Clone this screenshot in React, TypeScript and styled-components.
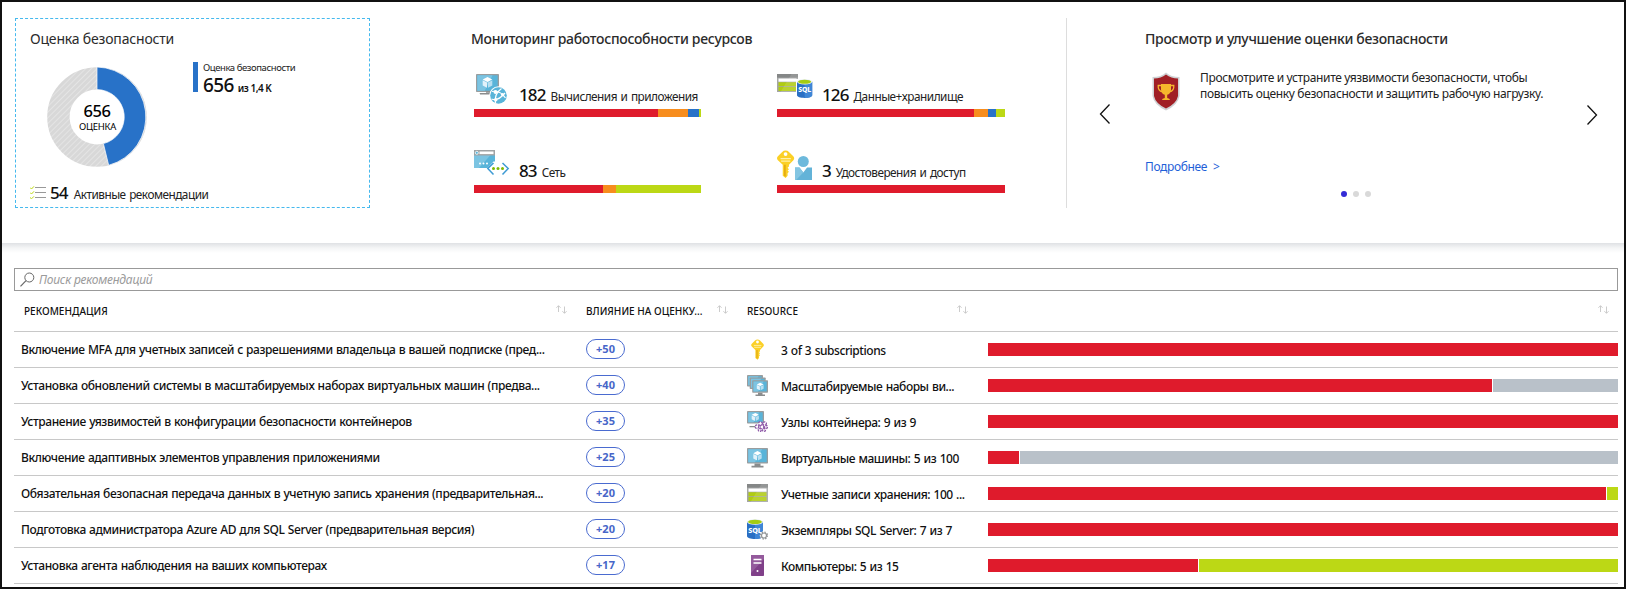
import React from 'react';
import styled, { createGlobalStyle } from 'styled-components';

const RED = '#df1b2c';
const ORANGE = '#f78d1e';
const BLUE = '#2872c8';
const LIME = '#bcd815';
const GREY = '#b9c1c9';

const GlobalStyle = createGlobalStyle`
  * { box-sizing: border-box; }
  body { margin: 0; background: #fff; }
`;

const Page = styled.div`
  width: 1626px;
  height: 589px;
  border: 2px solid #111;
  background: #fff;
  color: #111;
  font-family: 'Noto Sans', 'Open Sans', sans-serif;
  font-size: 12px;
  white-space: nowrap;
  overflow: hidden;
`;

const Overview = styled.section`
  display: flex;
  height: 241px;
  padding: 16px 0 0 13px;
`;

const Title = styled.h2<{ $medium?: boolean }>`
  margin: 0;
  padding-top: 1px;
  color: #2b2b2b;
  font-size: 14px;
  line-height: 20px;
  font-weight: ${(p) => (p.$medium ? 500 : 400)};
  letter-spacing: ${(p) => (p.$medium ? '-0.31px' : '-0.18px')};
`;

const ScoreCard = styled.div`
  width: 355px;
  height: 190px;
  padding: 9px 14px 0;
  border: 1px dashed #45b9ee;
`;

const ScoreBody = styled.div`
  display: flex;
  align-items: flex-start;
  height: 121px;
  margin-top: 13px;
`;

const Donut = styled.svg`
  margin: 5px 46px 0 17px;
  flex: none;
`;

const Legend = styled.div`
  height: 30px;
  padding-left: 5px;
  border-left: 5px solid ${BLUE};
`;

const LegendName = styled.div`
  color: #222;
  font-size: 9.5px;
  line-height: 11px;
  letter-spacing: -0.42px;
`;

const LegendValue = styled.div`
  display: flex;
  align-items: baseline;
  gap: 4px;
  font-size: 10px;
  font-weight: 600;
  line-height: 22px;
  margin-top: 1px;
  letter-spacing: -0.5px;
  strong { font-size: 19px; font-weight: 500; letter-spacing: -0.6px; }
`;

const CountLine = styled.div`
  display: flex;
  align-items: baseline;
  line-height: 20px;
  color: #111;
  svg { flex: none; }
`;

const Count = styled.span`
  font-size: 17px;
  font-weight: 500;
  letter-spacing: -0.9px;
  margin-right: 6px;
`;

const CountLabel = styled.span`
  font-size: 11.8px;
  letter-spacing: -0.5px;
  word-spacing: 1px;
  color: #222;
`;

const Monitoring = styled.div`
  width: 595px;
  padding: 10px 0 0;
  margin-left: 101px;
`;

const MonitorGrid = styled.div`
  display: grid;
  grid-template-columns: 227px 228px;
  gap: 33px 76px;
  margin: 25px 0 0 3px;
`;

const MonitorHead = styled.div`
  display: flex;
  height: 35px;
  > svg { flex: none; width: 36px; height: 31px; margin-right: 9px; }
  ${CountLine} { margin-top: 11px; }
  ${Count} { margin-right: 5px; }
`;

const Bar = styled.div<{ $height: number; $gap?: number }>`
  display: flex;
  gap: ${(p) => p.$gap ?? 0}px;
  height: ${(p) => p.$height}px;
`;

const Segment = styled.div<{ $color: string; $size: number }>`
  flex: ${(p) => p.$size} 1 0;
  background: ${(p) => p.$color};
`;

const Carousel = styled.div`
  display: flex;
  flex: 1;
  height: 190px;
  border-left: 1px solid #ddd;
`;

const NavButton = styled.button<{ $next?: boolean }>`
  width: 12px;
  height: 20px;
  padding: 0;
  border: 0;
  background: none;
  margin: ${(p) => (p.$next ? '87px 0 0 19px' : '86px 0 0 32px')};
`;

const Slide = styled.div`
  width: 422px;
  margin-left: 34px;
  padding-top: 10px;
`;

const SlideBody = styled.div`
  display: flex;
  height: 87px;
  margin-top: 21px;
  color: #222;
  line-height: 16px;
  letter-spacing: -0.35px;
  svg { flex: none; margin: 2px 19px 0 6px; }
`;

const SlideText = styled.p`
  margin: 0;
  white-space: pre-line;
`;

const MoreLink = styled.a`
  display: block;
  color: #1f5fd8;
  line-height: 20px;
  letter-spacing: -0.35px;
  word-spacing: 3px;
`;

const Dots = styled.div`
  display: flex;
  justify-content: center;
  gap: 6px;
  margin-top: 14px;
`;

const Dot = styled.i<{ $active?: boolean }>`
  width: 6px;
  height: 6px;
  border-radius: 50%;
  background: ${(p) => (p.$active ? '#342bd6' : '#d9d9d9')};
`;

const List = styled.section`
  height: 344px;
  padding: 25px 6px 0 12px;
  background: linear-gradient(#dfe1e4, #f4f5f6 5px, #fff 10px);
`;

const Search = styled.div`
  display: flex;
  align-items: center;
  height: 23px;
  padding-left: 5px;
  gap: 4px;
  border: 1px solid #999;
  background: #fff;
  color: #9b9b9b;
  font-style: italic;
  letter-spacing: -0.22px;
`;

const Columns = styled.div`
  display: grid;
  grid-template-columns: 572px 161px 241px 630px;
`;

const HeaderRow = styled(Columns)`
  height: 41px;
  border-bottom: 1px solid #c8c8c8;
`;

const HeaderCell = styled.div<{ $left?: number; $right?: number }>`
  display: flex;
  align-items: center;
  justify-content: space-between;
  padding-left: ${(p) => p.$left ?? 0}px;
  padding-right: ${(p) => p.$right ?? 19}px;
  font-size: 10px;
  font-weight: 500;
  letter-spacing: 0.02px;
  svg { margin: 0 0 3px auto; }
`;

const Row = styled(Columns)`
  height: 36px;
  border-bottom: 1px solid #c8c8c8;
`;

const Name = styled.div`
  padding-left: 7px;
  line-height: 35px;
  font-weight: 500;
  letter-spacing: -0.39px;
  word-spacing: 0.5px;
`;

const Pill = styled.span`
  display: block;
  width: 39px;
  height: 20px;
  margin-top: 7px;
  border: 1px solid #4a6bd0;
  border-radius: 10px;
  color: #4766c8;
  font-size: 11px;
  font-weight: 700;
  line-height: 18px;
  text-align: center;
`;

const Resource = styled.div`
  display: flex;
  font-weight: 500;
  line-height: 37px;
  letter-spacing: -0.45px;
  word-spacing: 0.7px;
  svg { flex: none; margin: 7px 13px 0 0; }
`;

const BarCell = styled.div`
  padding-top: 11px;
`;

const Cube = ({ x, y, s = 1 }: { x: number; y: number; s?: number }) => (
  <g transform={`translate(${x} ${y}) scale(${s})`}>
    <path d="M0-4.5 4-2.5 0-.5-4-2.5Z" fill="#fff" />
    <path d="M-4-1.8-.4 0v4.4L-4 2.6Z" fill="#e3f2fa" />
    <path d="M4-1.8.4 0v4.4L4 2.6Z" fill="#b9dff1" />
  </g>
);

const Screen = ({ x = 0, y = 0, w = 21, h = 15 }: { x?: number; y?: number; w?: number; h?: number }) => (
  <g transform={`translate(${x} ${y})`}>
    <rect width={w} height={h} rx=".7" fill="#9a9d9e" />
    <path d={`M1.3 1.3H${w - 1.3}V${h - 1.3}H1.3Z`} fill="#59b4d9" />
    <path d={`M1.3 1.3H${w * 0.72}L${w * 0.38} ${h - 1.3}H1.3Z`} fill="#7cc4e2" />
  </g>
);

const KeyShape = () => (
  <>
    <path d="M10.5.4Q12 .4 13 1.5l3.2 3.2Q17.5 6 16.3 7.5L13 11v1.2l-1 1 1 1-1 1 1 1-1 1V19l-1.5 1.8L8.4 19v-8L4.8 7.5Q3.5 6 4.8 4.7L8 1.5Q9 .4 10.5.4Z" fill="#fbd026" />
    <path d="M9.4 11h1.2v8.8L9.4 19Z" fill="#e3a912" />
    <circle cx="10.5" cy="3" r="1.4" fill="#fff" />
    <path d="M6.8 6.4h7.6M7.2 8.3h6.8" stroke="#fff0a8" strokeWidth=".9" />
  </>
);

const StorageShape = () => (
  <>
    <rect width="21" height="18" y="1" fill="#a4a6a6" />
    <path d="M0 1h21v3.6H0Z" fill="#858787" />
    <path d="M1.5 5.5h18v3.2h-18Z" fill="#fff" />
    <path d="M1.5 9.3h18v4h-18ZM1.5 14h18v4h-18Z" fill="#b0cc12" />
    <path d="M14.5 1H21v18H3.5Z" fill="#fff" opacity=".13" />
  </>
);

const SqlShape = () => (
  <>
    <path d="M0 2.8v14.4C0 18.8 3.5 20 8 20s8-1.2 8-2.8V2.8Z" fill="#2a6fc4" />
    <path d="M8 2.8v17.2c4.5 0 8-1.2 8-2.8V2.8Z" fill="#3f86d6" />
    <ellipse cx="8" cy="2.9" rx="8" ry="2.8" fill="#eef3f7" />
    <ellipse cx="8" cy="2.9" rx="6.9" ry="2.2" fill="#a4cb13" />
    <text x="8" y="14" textAnchor="middle" fontSize="7.2" fontWeight="800" letterSpacing="-.2" fill="#fff">SQL</text>
  </>
);

const Svg = ({ children, w = 21, h = 21 }: { children: React.ReactNode; w?: number; h?: number }) => (
  <svg width={w} height={h} viewBox={`0 0 ${w} ${h}`}>{children}</svg>
);

const icons: Record<string, React.ReactNode> = {
  key: <Svg><KeyShape /></Svg>,
  vm: (
    <Svg>
      <Screen y={1} h={15.5} />
      <path d="M7.5 16.500h6v2.300h3V20.500H4.500v-1.700h3Z" fill="#8a8c8d" />
      <Cube x={10.5} y={8.800} s={1.050} />
    </Svg>
  ),
  scaleSet: (
    <Svg>
      <Screen w={16} h={11.5} />
      <Screen x={2.7} y={2.5} w={16} h={11.5} />
      <Screen x={5.2} y={5.2} w={15.8} h={12.5} />
      <path d="M11 17.7h4.5v1.8h2.5V21H8.500v-1.500H11Z" fill="#8a8c8d" />
      <Cube x={13.2} y={11.5} s={0.85} />
    </Svg>
  ),
  container: (
    <Svg>
      <Screen w={17} h={12.5} />
      <path d="M6 12.500h3v2.500H2.500v1.300H9V12.500Z" fill="#8a8c8d" />
      <Cube x={8.300} y={6} s={0.9} />
      <g fill="#fff" stroke="#8f5aa8" strokeWidth="1.300" strokeDasharray="2 .9">
        <circle cx="13.500" cy="12.600" r="1.900" />
        <circle cx="17.700" cy="12.600" r="1.700" />
        <circle cx="10" cy="15.700" r="1.800" />
        <circle cx="15" cy="16" r="1.900" />
        <circle cx="19" cy="16" r="1.500" />
        <circle cx="12.800" cy="19" r="1.500" />
        <circle cx="17" cy="19" r="1.500" />
      </g>
    </Svg>
  ),
  storage: <Svg><StorageShape /></Svg>,
  sql: (
    <Svg>
      <SqlShape />
      <circle cx="17" cy="16.500" r="4.200" fill="#fff" />
      <circle cx="17" cy="16.500" r="3.500" fill="none" stroke="#929596" strokeWidth="1.300" strokeDasharray="1.400 1.350" />
      <circle cx="17" cy="16.500" r="2.500" fill="#fff" stroke="#929596" strokeWidth="1.200" />
    </Svg>
  ),
  server: (
    <Svg>
      <rect x="4" width="13" height="21" rx=".8" fill="#804089" />
      <path d="M4 .8Q4 0 4.800 0H16.200Q17 0 17 .8V4L4 18Z" fill="#945a9c" />
      <path d="M6.500 4.500h8M6.500 8h8" stroke="#fff" strokeWidth="1.500" />
      <circle cx="10.500" cy="16" r="1" fill="#fff" />
    </Svg>
  ),
  compute: (
    <Svg w={36} h={31}>
      <Screen x={2} w={23} h={18} />
      <path d="M12 18h4v1.500H6V20H16V18Z" fill="#8a8c8d" stroke="#8a8c8d" />
      <Cube x={13.500} y={8.500} s={1.200} />
      <circle cx="24.500" cy="21.500" r="9.300" fill="#fff" />
      <circle cx="24.500" cy="21.500" r="8.300" fill="#59b4d9" />
      <path d="M18 17.500Q26 16 31.500 24M21.500 29Q20 20 27.500 14.500M17.500 25Q24 27.500 31 19" fill="none" stroke="#fff" strokeWidth="1.200" />
      <g fill="#fff"><circle cx="21.500" cy="18" r="2" /><circle cx="28.500" cy="20.500" r="1.600" /><circle cx="21.800" cy="25.800" r="1.700" /></g>
    </Svg>
  ),
  network: (
    <Svg w={36} h={31}>
      <path d="M0 0h21v18H0Z" fill="#59b4d9" />
      <path d="M0 0h21L5 18H0Z" fill="#7cc4e2" />
      <path d="M0 0h21v5.500H0Z" fill="#a0a3a4" />
      <path d="M5.500 1.500h14v2.600h-14Z" fill="#fff" />
      <circle cx="2.800" cy="2.800" r="1.500" fill="#59b4d9" stroke="#fff" strokeWidth=".8" />
      <path d="M19.500 11.500 13 18.500h9V11.500Z" fill="#fff" />
      <g fill="#fff"><circle cx="6" cy="13.500" r="1" /><circle cx="9.500" cy="13.500" r="1" /><circle cx="13" cy="13.500" r="1" /></g>
      <path d="M19.500 13 13.800 18.500l5.700 6M28.500 13l5.700 5.500-5.700 6" fill="none" stroke="#3e9bd4" strokeWidth="1.500" />
      <g fill="#7fba00"><circle cx="19.500" cy="18.500" r="1.500" /><circle cx="24" cy="18.500" r="1.500" /><circle cx="28.500" cy="18.500" r="1.500" /></g>
    </Svg>
  ),
  data: (
    <Svg w={36} h={31}>
      <g transform="translate(0 -1)"><StorageShape /></g>
      <path d="M19 5h17v20H19Z" fill="#fff" />
      <g transform="translate(20 5) scale(.95)"><SqlShape /></g>
    </Svg>
  ),
  identity: (
    <Svg w={36} h={31}>
      <g transform="translate(-5.600 0) scale(1.350)"><KeyShape /></g>
      <circle cx="26.300" cy="11.500" r="5.500" fill="#6db9dc" />
      <path d="M18 17.500h4.500l3.800 5 3.800-5H35V30H18Z" fill="#63b3d8" />
      <path d="M18 17.500h4.500l3.800 5L19 30H18Z" fill="#83c5e2" />
    </Svg>
  ),
};

const SortIcon = () => (
  <svg width="11" height="9" viewBox="0 0 11 9" fill="none" stroke="#c6c6c6" strokeWidth=".9">
    <path d="M2.500 7V.8M.4 2.800 2.500.7l2.100 2.100M8.500 1.500v6.700M6.400 6.200l2.100 2.100 2.100-2.100" />
  </svg>
);

const ScoreDonut = () => (
  <Donut width="100" height="100" viewBox="0 0 100 100">
    <defs>
      <pattern id="hatch" width="4" height="4" patternUnits="userSpaceOnUse" patternTransform="rotate(45)">
        <rect width="4" height="4" fill="#d8d8d8" />
        <rect width="1" height="4" fill="#e4e4e4" />
      </pattern>
    </defs>
    <circle cx="50" cy="50" r="38.600" fill="none" stroke="url(#hatch)" strokeWidth="22.400" />
    <path d="M50 0A50 50 0 0 1 61.700 98.300L56.400 76.600A27.400 27.400 0 0 0 50 22.600Z" fill={BLUE} stroke="#fff" strokeWidth=".7" />
    <text x="50" y="49.500" textAnchor="middle" fontSize="16.500" fontWeight="500" letterSpacing="-.4">656</text>
    <text x="50.500" y="63" textAnchor="middle" fontSize="9.500" letterSpacing="-.3">ОЦЕНКА</text>
  </Donut>
);

type Part = [string, number];

const areas: { icon: string; count: number; label: string; parts: Part[] }[] = [
  { icon: 'compute', count: 182, label: 'Вычисления и приложения', parts: [[RED, 184], [ORANGE, 30], [BLUE, 11], [LIME, 2]] },
  { icon: 'data', count: 126, label: 'Данные+хранилище', parts: [[RED, 197], [ORANGE, 14], [BLUE, 8], [LIME, 9]] },
  { icon: 'network', count: 83, label: 'Сеть', parts: [[RED, 129], [ORANGE, 13], [LIME, 85]] },
  { icon: 'identity', count: 3, label: 'Удостоверения и доступ', parts: [[RED, 1]] },
];

const rows: { name: string; score: number; icon: string; resource: string; parts: Part[] }[] = [
  { name: 'Включение MFA для учетных записей с разрешениями владельца в вашей подписке (пред...', score: 50, icon: 'key', resource: '3 of 3 subscriptions', parts: [[RED, 1]] },
  { name: 'Установка обновлений системы в масштабируемых наборах виртуальных машин (предва...', score: 40, icon: 'scaleSet', resource: 'Масштабируемые наборы ви...', parts: [[RED, 504], [GREY, 125]] },
  { name: 'Устранение уязвимостей в конфигурации безопасности контейнеров', score: 35, icon: 'container', resource: 'Узлы контейнера: 9 из 9', parts: [[RED, 1]] },
  { name: 'Включение адаптивных элементов управления приложениями', score: 25, icon: 'vm', resource: 'Виртуальные машины: 5 из 100', parts: [[RED, 31], [GREY, 598]] },
  { name: 'Обязательная безопасная передача данных в учетную запись хранения (предварительная...', score: 20, icon: 'storage', resource: 'Учетные записи хранения: 100 ...', parts: [[RED, 618], [LIME, 11]] },
  { name: 'Подготовка администратора Azure AD для SQL Server (предварительная версия)', score: 20, icon: 'sql', resource: 'Экземпляры SQL Server: 7 из 7', parts: [[RED, 1]] },
  { name: 'Установка агента наблюдения на ваших компьютерах', score: 17, icon: 'server', resource: 'Компьютеры: 5 из 15', parts: [[RED, 210], [LIME, 419]] },
];

const StackedBar = ({ parts, height, gap }: { parts: Part[]; height: number; gap?: number }) => (
  <Bar $height={height} $gap={gap}>
    {parts.map(([color, size]) => <Segment key={color} $color={color} $size={size} />)}
  </Bar>
);

export default function App() {
  return (
    <Page>
      <GlobalStyle />
      <Overview>
        <ScoreCard>
          <Title>Оценка безопасности</Title>
          <ScoreBody>
            <ScoreDonut />
            <Legend>
              <LegendName>Оценка безопасности</LegendName>
              <LegendValue><strong>656</strong>из 1,4 K</LegendValue>
            </Legend>
          </ScoreBody>
          <CountLine>
            <svg width="20" height="13" viewBox="0 0 20 13" fill="none">
              <path d="M5 1.500h11M5 6.500h11M5 11.500h11" stroke="#999" />
              <path d="M0 1.500l1.500 1.500L4 .3M0 6.500 1.500 8 4 5.300M0 11.500l1.500 1.300L4 10.300" stroke="#bcd815" />
            </svg>
            <Count>54</Count>
            <CountLabel>Активные рекомендации</CountLabel>
          </CountLine>
        </ScoreCard>

        <Monitoring>
          <Title $medium>Мониторинг работоспособности ресурсов</Title>
          <MonitorGrid>
            {areas.map((a) => (
              <div key={a.icon}>
                <MonitorHead>
                  {icons[a.icon]}
                  <CountLine>
                    <Count>{a.count}</Count>
                    <CountLabel>{a.label}</CountLabel>
                  </CountLine>
                </MonitorHead>
                <StackedBar parts={a.parts} height={8} />
              </div>
            ))}
          </MonitorGrid>
        </Monitoring>

        <Carousel>
          <NavButton aria-label="Назад">
            <svg width="12" height="20" viewBox="0 0 12 20"><path d="M10.500.5 1.500 10l9 9.500" fill="none" stroke="#111" strokeWidth="1.300" /></svg>
          </NavButton>
          <Slide>
            <Title $medium>Просмотр и улучшение оценки безопасности</Title>
            <SlideBody>
              <svg width="30" height="39" viewBox="0 0 30 39">
                <path d="M15 .5Q20 5 28.500 5V24Q27 33 15 38.500 3 33 1.500 24V5Q10 5 15 .5Z" fill="#cfd2d4" />
                <path d="M15 2.500Q20 6.500 27 6.500V24Q25.500 31.500 15 36.500 4.500 31.500 3 24V6.500Q10 6.500 15 2.500Z" fill="#a01f25" />
                <path d="M10 12h10v6q-.6 4-3.800 4.800V26q2.800.3 2.800 2h-8q0-1.700 2.800-2v-3.200Q10.600 22 10 18Z" fill="#f5b72c" />
                <path d="M10 13.500H7.200q-.4 5.500 4.300 6.300M20 13.500h2.800q.4 5.500-4.300 6.300" fill="none" stroke="#f5b72c" strokeWidth="1.300" />
              </svg>
              <SlideText>{'Просмотрите и устраните уязвимости безопасности, чтобы\nповысить оценку безопасности и защитить рабочую нагрузку.'}</SlideText>
            </SlideBody>
            <MoreLink>Подробнее &gt;</MoreLink>
            <Dots><Dot $active /><Dot /><Dot /></Dots>
          </Slide>
          <NavButton $next aria-label="Вперед">
            <svg width="12" height="20" viewBox="0 0 12 20"><path d="M1.500.5l9 9.500-9 9.500" fill="none" stroke="#111" strokeWidth="1.300" /></svg>
          </NavButton>
        </Carousel>
      </Overview>

      <List>
        <Search>
          <svg width="15" height="15" viewBox="0 0 15 15" fill="none" stroke="#666"><circle cx="9.300" cy="5.500" r="4.500" /><path d="M6 8.700.5 14.300" strokeWidth="1.200" /></svg>
          Поиск рекомендаций
        </Search>
        <HeaderRow>
          <HeaderCell $left={10}>РЕКОМЕНДАЦИЯ<SortIcon /></HeaderCell>
          <HeaderCell>ВЛИЯНИЕ НА ОЦЕНКУ...<SortIcon /></HeaderCell>
          <HeaderCell $right={20}>RESOURCE<SortIcon /></HeaderCell>
          <HeaderCell $right={9}><SortIcon /></HeaderCell>
        </HeaderRow>
        {rows.map((r) => (
          <Row key={r.name}>
            <Name>{r.name}</Name>
            <div><Pill>+{r.score}</Pill></div>
            <Resource>{icons[r.icon]}{r.resource}</Resource>
            <BarCell><StackedBar parts={r.parts} height={13} gap={1} /></BarCell>
          </Row>
        ))}
      </List>
    </Page>
  );
}
